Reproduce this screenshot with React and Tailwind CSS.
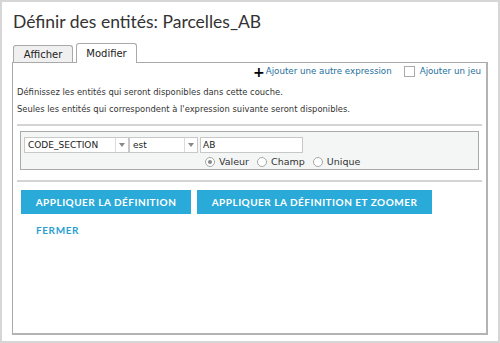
import React from "react";

const body = { fontFamily: '"DejaVu Sans", Verdana, sans-serif' };
const head = { fontFamily: 'Lato, "Open Sans", sans-serif' };

function Select({ value, width }) {
  return (
    <div className={`flex h-[16px] items-stretch border border-[#c8c8c8] bg-white ${width}`}>
      <span className="flex-1 truncate pl-[3px] text-[9px] leading-[14px] text-[#222]">{value}</span>
      <span className="flex w-[13px] items-center justify-center border-l border-[#dcdcdc]">
        <svg width="6" height="4" viewBox="0 0 6 4"><path d="M0 0h6L3 4z" fill="#888" /></svg>
      </span>
    </div>
  );
}

function Radio({ label, checked }) {
  return (
    <label className="flex items-center gap-[4px] text-[9.5px] text-[#333]">
      <span className="flex h-[10px] w-[10px] items-center justify-center rounded-full border border-[#a8a8a8] bg-white">
        {checked && <span className="h-[4px] w-[4px] rounded-full bg-[#888]" />}
      </span>
      {label}
    </label>
  );
}

export default function App() {
  return (
    <div className="flex h-[343px] w-[500px] flex-col border-2 border-[#d6d6d6] bg-white" style={body}>
      <h1 className="px-[11px] pt-[8px] text-[17.5px] leading-[24px] text-[#333]" style={head}>
        Définir des entités: Parcelles_AB
      </h1>

      <div className="mt-[9px] flex items-end gap-[3px] pl-[11px]">
        <div className="flex h-[17px] w-[60px] items-center justify-center rounded-t-[3px] border border-b-0 border-[#a9a9a9] bg-[#f0f0f0] text-[10px] text-[#222]">
          Afficher
        </div>
        <div className="relative -mb-px flex h-[20px] w-[61px] items-center justify-center rounded-t-[3px] border border-b-0 border-[#a9a9a9] bg-white text-[10px] text-[#222]">
          Modifier
        </div>
      </div>

      <div className="mx-[10px] mb-[6px] flex-1 border border-r-2 border-b-2 border-[#a9a9a9] border-r-[#b3b3b3] border-b-[#b3b3b3] px-[4px]">
        <div className="flex items-center justify-end gap-[12px] pt-[2px] pr-[1px] text-[8.7px] text-[#1e6f9c]">
          <span className="flex items-center gap-[1px]">
            <span className="text-[14px] font-bold leading-none text-black">+</span>
            Ajouter une autre expression
          </span>
          <span className="flex items-center gap-[5px]">
            <span className="h-[11px] w-[11px] border border-[#aaa] bg-white" />
            Ajouter un jeu
          </span>
        </div>

        <p className="mt-[5px] text-[8.4px] leading-[17px] text-[#333]">
          Définissez les entités qui seront disponibles dans cette couche.
          <br />
          Seules les entités qui correspondent à l'expression suivante seront disponibles.
        </p>

        <div className="mt-[6px] h-[2px] bg-[#d4d4d4]" />

        <div className="mx-[3px] mt-[5px] flex h-[39px] flex-col border border-[#aaa] bg-[#f4f6f6] px-[3px] pt-[5px]">
          <div className="flex items-center">
            <Select value="CODE_SECTION" width="w-[105px]" />
            <Select value="est" width="w-[69px]" />
            <div className="ml-[2px] h-[16px] w-[103px] border border-[#c8c8c8] bg-white pl-[2px] text-[9px] leading-[14px] text-[#222]">
              AB
            </div>
          </div>
          <div className="mt-[2px] flex gap-[8px] pl-[181px]">
            <Radio label="Valeur" checked />
            <Radio label="Champ" />
            <Radio label="Unique" />
          </div>
        </div>

        <div className="mt-[10px] h-[2px] bg-[#d4d4d4]" />

        <div className="mt-[8px] flex gap-[6px] pl-[4px]" style={head}>
          <button className="h-[24px] w-[170px] bg-[#2aaad8] text-[10px] font-bold tracking-[0.05em] text-white">
            APPLIQUER LA DÉFINITION
          </button>
          <button className="h-[24px] w-[235px] bg-[#2aaad8] text-[10px] font-bold tracking-[0.05em] text-white">
            APPLIQUER LA DÉFINITION ET ZOOMER
          </button>
        </div>

        <div className="mt-[9px] pl-[19px] text-[10px] font-bold tracking-[0.06em] text-[#2a9fd4]" style={head}>
          FERMER
        </div>
      </div>
    </div>
  );
}
